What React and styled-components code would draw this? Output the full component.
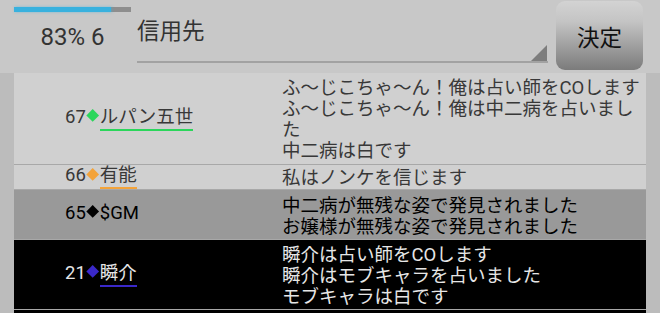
import React from "react";
import styled, { createGlobalStyle } from "styled-components";

const GlobalStyle = createGlobalStyle`
  html, body { margin: 0; padding: 0; }
  body {
    background: #c8c8c8;
    width: 660px;
    height: 313px;
    overflow: hidden;
    font-family: Roboto, "Noto Sans CJK JP", sans-serif;
  }
`;

const Screen = styled.div`
  width: 660px;
  height: 313px;
  overflow: hidden;
  display: flex;
  flex-direction: column;
  background: #c8c8c8;
`;

const Header = styled.header`
  display: flex;
  align-items: flex-start;
  height: 73px;
  flex-shrink: 0;
  padding-left: 14px;
`;

const Status = styled.div`
  width: 117px;
  display: flex;
  flex-direction: column;
  align-items: center;
  padding-top: 7px;
`;

const Progress = styled.div`
  align-self: stretch;
  height: 5px;
  background: #8e8e8e;
`;

const ProgressFill = styled.div`
  height: 100%;
  background: #38b1de;
  box-shadow: 1px 0 3px rgba(56, 177, 222, 0.55);
`;

const Count = styled.div`
  margin-top: 11px;
  font-size: 24px;
  line-height: 28px;
  color: #333;
`;

const Spinner = styled.div`
  position: relative;
  margin-left: 6px;
  width: 411px;
  height: 45px;
  padding-top: 16px;
  border-bottom: 2px solid #a2a2a2;
  font-size: 22.5px;
  line-height: 30px;
  color: #333;

  &::after {
    content: "";
    position: absolute;
    right: 1px;
    bottom: 0;
    width: 0;
    height: 0;
    border-left: 16px solid transparent;
    border-bottom: 16px solid #7d7d7d;
  }
`;

const Button = styled.button`
  margin: 1px 0 0 8px;
  width: 87px;
  height: 69px;
  border: none;
  border-radius: 9px;
  background: linear-gradient(#d3d3d3 0%, #c4c4c4 30%, #7b7b7b 100%);
  font-family: Roboto, "Noto Sans CJK JP", sans-serif;
  font-size: 22.5px;
  color: #111;
  display: flex;
  align-items: center;
  justify-content: center;
  padding: 0;
`;

const List = styled.div`
  flex: 1;
  display: flex;
  flex-direction: column;
  background: #bcbcbc;
  padding: 0 14px;
  overflow: hidden;
`;

const tones = {
  normal: { bg: "#d0d0d0", fg: "#383838" },
  system: { bg: "#999999", fg: "#000000" },
  dark: { bg: "#000000", fg: "#e6e6e6" },
};

const Row = styled.div`
  display: flex;
  flex-shrink: 0;
  background: ${(p) => tones[p.$tone].bg};
  color: ${(p) => tones[p.$tone].fg};
  border-bottom: 1px solid #a8a8a8;
`;

const FillerRow = styled(Row)`
  flex: 1;
  border-bottom: none;
`;

const NameCell = styled.div`
  align-self: center;
  width: 268px;
  flex-shrink: 0;
  box-sizing: border-box;
  padding-left: 51px;
  font-size: 18.5px;
  line-height: 21px;
  white-space: nowrap;
`;

const Diamond = styled.span`
  display: inline-block;
  width: 9.4px;
  height: 9.4px;
  margin: 0 2.3px;
  vertical-align: 1.9px;
  background: ${(p) => p.$color};
  transform: rotate(45deg);
`;

const Name = styled.span`
  display: inline-block;
  line-height: 21px;
  padding-bottom: 1px;
  border-bottom: 2px solid ${(p) => (p.$underline ? p.$color : "transparent")};
`;

const Message = styled.div`
  flex: 1;
  font-size: 18.5px;
  line-height: 21px;
  padding: ${(p) => p.$pad[0]}px 0 ${(p) => p.$pad[1]}px;
`;

const Line = styled.div``;

const entries = [
  {
    id: 67,
    color: "#2bd65b",
    name: "ルパン五世",
    tone: "normal",
    underline: true,
    pad: [5, 2],
    lines: [
      "ふ〜じこちゃ〜ん！俺は占い師をCOします",
      "ふ〜じこちゃ〜ん！俺は中二病を占いました",
      "中二病は白です",
    ],
  },
  {
    id: 66,
    color: "#f3a33a",
    name: "有能",
    tone: "normal",
    underline: true,
    pad: [3, 0],
    lines: ["私はノンケを信じます"],
  },
  {
    id: 65,
    color: "#000000",
    name: "$GM",
    tone: "system",
    underline: false,
    pad: [6, 1],
    lines: ["中二病が無残な姿で発見されました", "お嬢様が無残な姿で発見されました"],
  },
  {
    id: 21,
    color: "#3a28c9",
    name: "瞬介",
    tone: "dark",
    underline: true,
    pad: [5, 1],
    lines: ["瞬介は占い師をCOします", "瞬介はモブキャラを占いました", "モブキャラは白です"],
  },
];

export default function App() {
  const progress = 83;
  return (
    <Screen>
      <GlobalStyle />
      <Header>
        <Status>
          <Progress>
            <ProgressFill style={{ width: `${progress}%` }} />
          </Progress>
          <Count>{progress}% 6</Count>
        </Status>
        <Spinner>信用先</Spinner>
        <Button>決定</Button>
      </Header>
      <List>
        {entries.map((e, i) => (
          <Row key={i} $tone={e.tone}>
            <NameCell>
              {e.id}
              <Diamond $color={e.color} />
              <Name $color={e.color} $underline={e.underline}>
                {e.name}
              </Name>
            </NameCell>
            <Message $pad={e.pad}>
              {e.lines.map((l, j) => (
                <Line key={j}>{l}</Line>
              ))}
            </Message>
          </Row>
        ))}
        <FillerRow $tone="dark" />
      </List>
    </Screen>
  );
}
